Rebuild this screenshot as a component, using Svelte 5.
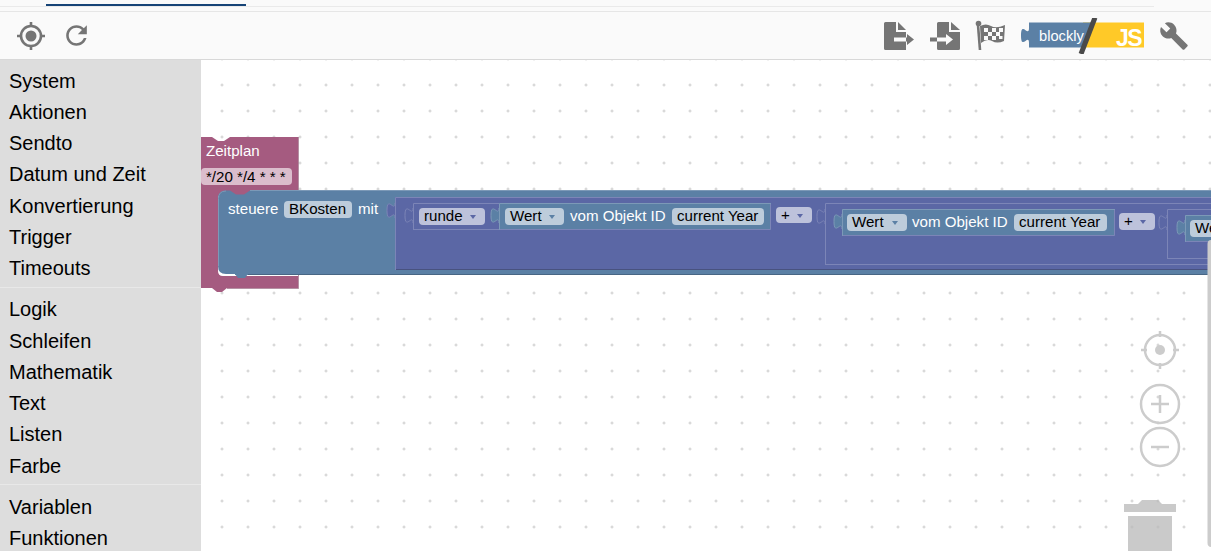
<script>
	const groups = [
		["System", "Aktionen", "Sendto", "Datum und Zeit", "Konvertierung", "Trigger", "Timeouts"],
		["Logik", "Schleifen", "Mathematik", "Text", "Listen", "Farbe"],
		["Variablen", "Funktionen"]
	];

	const indigo = { fill: "#5b67a5", light: "#7c85b7", dark: "#48527f", field: "#bdc2db" };
	const blue = { fill: "#5b80a5", light: "#7c99b7", dark: "#486684", field: "#bdccdb" };

	// value blocks, outermost first
	const blocks = [
		{ x: 395, y: 197, r: 1225, b: 270, c: indigo, ty: 203, edge: indigo.dark },
		{ x: 413, y: 203, r: 771, b: 230, c: indigo, ty: 208, edge: indigo.light },
		{ x: 499, y: 203, r: 771, b: 230, c: blue, ty: 208, edge: indigo.light },
		{ x: 825, y: 203, r: 1225, b: 265, c: indigo, ty: 209, edge: indigo.light },
		{ x: 842, y: 209, r: 1115, b: 236, c: blue, ty: 214, edge: indigo.light },
		{ x: 1167, y: 209, r: 1225, b: 259, c: indigo, ty: 215, edge: indigo.light },
		{ x: 1185, y: 215, r: 1225, b: 242, c: blue, ty: 220, edge: indigo.light }
	];

	const fields = [
		{ x: 201, y: 168, w: 91, h: 17, fill: "#dbbdcc", text: "*/20 */4 * * *", base: 182 },
		{ x: 284, y: 201, w: 68, h: 17, fill: blue.field, text: "BKosten", base: 214 },
		{ x: 419, y: 208, w: 66, h: 17, fill: indigo.field, text: "runde", base: 221, arrow: indigo.fill },
		{ x: 505, y: 208, w: 59, h: 17, fill: blue.field, text: "Wert", base: 221, arrow: blue.fill },
		{ x: 672, y: 208, w: 92, h: 17, fill: blue.field, text: "current Year", base: 221 },
		{ x: 776, y: 207, w: 36, h: 16, fill: indigo.field, text: "+", base: 220, arrow: indigo.fill },
		{ x: 847, y: 214, w: 60, h: 17, fill: blue.field, text: "Wert", base: 227, arrow: blue.fill },
		{ x: 1014, y: 214, w: 93, h: 17, fill: blue.field, text: "current Year", base: 227 },
		{ x: 1119, y: 213, w: 36, h: 17, fill: indigo.field, text: "+", base: 226, arrow: indigo.fill },
		{ x: 1190, y: 220, w: 40, h: 17, fill: blue.field, text: "Wert", base: 233 }
	];

	const labels = [
		{ x: 206, y: 156, text: "Zeitplan" },
		{ x: 228, y: 214, text: "steuere" },
		{ x: 358, y: 214, text: "mit" },
		{ x: 570, y: 221, text: "vom Objekt ID" },
		{ x: 912, y: 227, text: "vom Objekt ID" }
	];

	const tab = (x, y) => `M${x} ${y}c0 10 -8 -8 -8 7.5s8 -2.5 8 7.5`;
</script>

<div class="page">
	<div class="strip">
		<div class="tab-mark"></div>
		<div class="strip-line"></div>
	</div>

	<header class="toolbar">
		<div class="tools tools-left">
			<svg width="28" height="28" viewBox="0 0 28 28" fill="none" stroke="#757575">
				<circle cx="14" cy="14" r="10" stroke-width="2.6" />
				<circle cx="14" cy="14" r="5.5" fill="#757575" stroke="none" />
				<path d="M14 0v4M14 24v4M0 14h4M24 14h4" stroke-width="2.6" />
			</svg>
			<svg class="refresh" width="31" height="31" viewBox="0 0 24 24" fill="#757575">
				<path d="M17.65 6.35C16.2 4.9 14.21 4 12 4c-4.42 0-7.99 3.58-7.99 8s3.57 8 7.99 8c3.73 0 6.84-2.55 7.73-6h-2.08c-.82 2.33-3.04 4-5.65 4-3.31 0-6-2.69-6-6s2.69-6 6-6c1.66 0 3.14.69 4.22 1.78L13 11h7V4l-2.35 2.35z" />
			</svg>
		</div>
		<div class="tools tools-right">
			<svg width="31" height="32" viewBox="0 0 31 32" fill="#757575">
				<path d="M1.5 2H12V12H22V17.5H10V21.5H22V30H1.5Q0 30 0 28.5V3.5Q0 2 1.5 2Z" />
				<path d="M14 2L22 10H14Z" />
				<path d="M22 17.5H23V14L30 19.5L23 25V21.5H22Z" />
			</svg>
			<svg width="31" height="32" viewBox="0 0 31 32" fill="#757575">
				<path d="M8.5 2H19V12H30V28.5Q30 30 28.5 30H8.5Q7 30 7 28.5V21.5H16V25L23 19.5L16 14V17.5H7V3.5Q7 2 8.5 2Z" />
				<path d="M21 2L30 10H21Z" />
				<path d="M0 17.5H7V21.5H0Z" />
			</svg>
			<svg width="31" height="32" viewBox="0 0 31 32">
				<circle cx="3.5" cy="3.5" r="2.8" fill="#757575" />
				<path d="M3 5L5 30" stroke="#757575" stroke-width="2.6" fill="none" />
				<path d="M5 6Q11 3 16 6T30 5L29 21Q22 24 17 21T6 23Z" fill="#757575" />
				<path d="M9 8h4v4h-4zM17 8h4v4h-4zM24 8h4v4h-4zM13 12h4v4h-4zM21 12h4v4h-4zM9 16h4v4h-4zM17 16h4v4h-4zM24 16h3.5v3h-3.5z" fill="#fafafa" />
			</svg>
			<svg class="logo" width="124" height="36" viewBox="0 0 124 36">
				<path d="M62 4.5H123V29.5H62Z" fill="#ffc928" />
				<path d="M8 4.5H72L62.4 29.5H8V25c0 -10 -8 8 -8 -7.5s8 2.5 8 -7.5Z" fill="#5b80a5" />
				<text class="logo-blockly" x="18" y="23">blockly</text>
				<text class="logo-js" x="95" y="27.5">JS</text>
				<path d="M74 -0.5L60 36" stroke="#4a4a4a" stroke-width="5" fill="none" />
			</svg>
			<svg width="30" height="30" viewBox="0 0 24 24" fill="#757575">
				<path d="M22.7 19l-9.1-9.1c.9-2.3.4-5-1.5-6.9-2-2-5-2.4-7.4-1.3L9 6 6 9 1.6 4.7C.4 7.1.9 10.1 2.9 12.1c1.9 1.9 4.6 2.4 6.9 1.5l9.1 9.1c.4.4 1 .4 1.4 0l2.3-2.3c.5-.4.5-1.1.1-1.4z" />
			</svg>
		</div>
	</header>

	<main class="body">
		<nav class="sidebar">
			{#each groups as group, i}
				{#if i > 0}
					<div class="sep"></div>
				{/if}
				{#each group as item}
					<div class="item">{item}</div>
				{/each}
			{/each}
		</nav>

		<svg class="workspace" viewBox="201 60 1010 491">
			<defs>
				<pattern id="grid" x="209" y="72" width="26" height="26" patternUnits="userSpaceOnUse">
					<path d="M11.5 13h3M13 11.5v3" stroke="#ccc" stroke-width="1" />
				</pattern>
			</defs>
			<rect x="201" y="60" width="1010" height="491" fill="#fff" />
			<rect x="201" y="60" width="1010" height="491" fill="url(#grid)" />

			<!-- schedule block with its statement slot -->
			<path d="M201 137H212l6 4h6l6 -4H298V196H218V271Q218 276 223 276H298V288H227l-5 4h-5l-5 -4H201Z" fill="#a55b80" />
			<path d="M298.5 137V190M298.5 275V288.5H227" stroke="#844866" fill="none" opacity="0.6" />

			<!-- control block -->
			<path d="M226 190.5H230l6 4h8l6 -4H1225V274H248l-3 4h-7l-3 -4H226Q218 274 218 266V198.5Q218 190.5 226 190.5Z" fill="#5b80a5" />
			<path d="M250 190.5H1225" stroke={blue.light} fill="none" />
			<path d="M218.5 266V198.5Q218.5 191 226 191" stroke={blue.light} fill="none" />
			<path d="M248 274.5H1225" stroke={blue.dark} fill="none" />
			<path d="M235 274.5H248" stroke="#5b80a5" fill="none" />

			{#each blocks as block}
				<rect x={block.x} y={block.y} width={block.r - block.x} height={block.b - block.y} fill={block.c.fill} />
				<path d={tab(block.x, block.ty)} fill={block.c.fill} stroke={block.c.light} stroke-width="1" />
				<path d={`M${block.x + 0.5} ${block.b}V${block.y + 0.5}H${block.r}`} stroke={block.c.light} fill="none" />
				<path d={`M${block.x + 1} ${block.b - 0.5}H${block.r - 0.5}V${block.y + 1}`} stroke={block.edge} fill="none" />
			{/each}

			{#each fields as f}
				<rect x={f.x} y={f.y} width={f.w} height={f.h} rx="4" fill={f.fill} />
				<text class="field" x={f.x + 5} y={f.base}>{f.text}</text>
				{#if f.arrow}
					<path d={`M${f.x + f.w - 15} ${f.y + 7}h6l-3 4z`} fill={f.arrow} />
				{/if}
			{/each}

			{#each labels as label}
				<text class="label" x={label.x} y={label.y}>{label.text}</text>
			{/each}

			<!-- zoom controls and trash -->
			<g class="controls" fill="none" stroke="#ccc" stroke-width="2.5">
				<circle cx="1160" cy="350" r="15" />
				<circle cx="1160" cy="350" r="5" fill="#ccc" stroke="none" />
				<path d="M1160 331v6M1160 363v6M1141 350h6M1173 350h6" />
				<circle cx="1160" cy="404" r="19" />
				<path d="M1151 404h18M1160 395v18" />
				<circle cx="1160" cy="447" r="19" />
				<path d="M1151 447h18" />
			</g>
			<path d="M1124 512V504H1138L1142 500H1158L1162 504H1176V512Z" fill="#b8b8b8" opacity="0.75" />
			<rect x="1128" y="516" width="44" height="36" fill="#b8b8b8" opacity="0.75" />

			<!-- scrollbar -->
			<rect x="1207.5" y="240" width="10" height="307" rx="4" fill="#ccc" />
		</svg>
	</main>
</div>

<style>
	:global(body) {
		background: #fff;
		overflow: hidden;
	}

	.page {
		display: flex;
		flex-direction: column;
		height: 551px;
		font-family: "Liberation Sans", Arial, sans-serif;
	}

	.strip {
		height: 12px;
		box-sizing: border-box;
		padding-top: 4px;
		background: #fafafa;
		border-bottom: 1px solid #e6e6e6;
	}

	.tab-mark {
		width: 200px;
		height: 2px;
		margin-left: 46px;
		background: #164477;
	}

	.strip-line {
		height: 1px;
		margin-right: 57px;
		background: #eaeaea;
	}

	.toolbar {
		display: flex;
		justify-content: space-between;
		align-items: center;
		height: 48px;
		box-sizing: border-box;
		padding: 0 22px 0 17px;
		background: #fafafa;
		border-bottom: 1px solid #d8d8d8;
	}

	.tools {
		display: flex;
		align-items: center;
	}

	.tools svg {
		display: block;
	}

	.tools-left {
		gap: 16px;
	}

	.tools-right {
		gap: 14.5px;
	}

	.logo-blockly {
		font-size: 14.67px;
		fill: #fff;
	}

	.logo-js {
		font-size: 23px;
		font-weight: 700;
		letter-spacing: -1.5px;
		fill: #fff;
	}

	.body {
		display: flex;
		flex: 1;
		min-height: 0;
	}

	.sidebar {
		width: 201px;
		flex: none;
		box-sizing: border-box;
		padding-top: 5.7px;
		background: #ddd;
		overflow: hidden;
	}

	.item {
		height: 31.25px;
		line-height: 31.25px;
		padding-left: 9px;
		font-size: 20px;
		color: #000;
		white-space: nowrap;
	}

	.sep {
		height: 1px;
		margin: 2.3px 0 6.6px;
		background: #e8e8e8;
	}

	.workspace {
		flex: 1;
		min-width: 0;
		height: 491px;
		display: block;
	}

	.field {
		font-size: 15.1px;
		fill: #000;
	}

	.label {
		font-size: 15.1px;
		fill: #fff;
	}
</style>
